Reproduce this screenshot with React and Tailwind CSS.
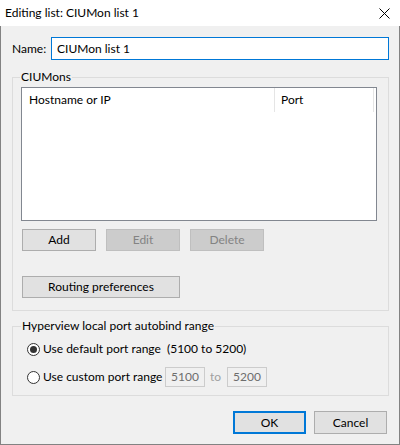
import React from "react";

const font = { fontFamily: 'Lato, "Noto Sans", sans-serif' };

function Btn({ children, disabled, className = "" }) {
  return (
    <div
      className={
        "flex items-center justify-center text-[12px] leading-none whitespace-nowrap " +
        (disabled
          ? "bg-[#cccccc] border border-[#bfbfbf] text-[#838383] "
          : "bg-[#e1e1e1] border border-[#adadad] text-black ") +
        className
      }
    >
      {children}
    </div>
  );
}

function Radio({ checked }) {
  return (
    <div className="w-[13px] h-[13px] rounded-full border border-[#333333] bg-white flex items-center justify-center shrink-0">
      {checked && <div className="w-[7px] h-[7px] rounded-full bg-[#333333]" />}
    </div>
  );
}

export default function App() {
  return (
    <div className="w-[400px] h-[445px] flex flex-col bg-[#f0f0f0] text-black text-[12px] whitespace-nowrap" style={font}>
      <div className="h-[26px] bg-white flex items-center justify-between pl-[5px] pr-[10px] shrink-0">
        <span className="text-[12px]">Editing list: CIUMon list 1</span>
        <svg width="11" height="11" viewBox="0 0 11 11" className="mt-[1px]">
          <path d="M0.5 0.5 L10.5 10.5 M10.5 0.5 L0.5 10.5" stroke="#000" strokeWidth="1" fill="none" />
        </svg>
      </div>
      <div className="flex-1 flex flex-col border-l border-r border-b border-[#828282] pl-[11px] pr-[10px] pt-[11px]">
        <div className="flex items-center h-[23px]">
          <span className="w-[39px]">Name:</span>
          <div className="flex-1 h-[23px] border border-[#0078d7] bg-white flex items-center pl-[5px]">
            CIUMon list 1
          </div>
        </div>

        <fieldset className="mt-[9px] border border-[#dcdcdc] px-[8px] pb-[12px]">
          <legend className="ml-[-1px] px-[1px] h-[16px] leading-[16px]">CIUMons</legend>
          <div className="mt-[2px] w-[356px] h-[134px] border border-[#828790] bg-white">
            <div className="flex h-[24px]">
              <div className="w-[253px] border-r border-[#e5e5e5] flex items-center pl-[7px]">Hostname or IP</div>
              <div className="w-[99px] border-r border-[#e5e5e5] flex items-center pl-[6px]">Port</div>
            </div>
          </div>
          <div className="flex gap-[10px] mt-[8px] ml-[1px]">
            <Btn className="w-[74px] h-[22px]">Add</Btn>
            <Btn disabled className="w-[74px] h-[22px]">Edit</Btn>
            <Btn disabled className="w-[74px] h-[22px]">Delete</Btn>
          </div>
          <Btn className="mt-[25px] ml-[1px] w-[158px] h-[22px]">Routing preferences</Btn>
        </fieldset>

        <fieldset className="mt-[7px] border border-[#dcdcdc] pl-[14px] pb-[8px]">
          <legend className="ml-[-6px] px-[1px] h-[16px] leading-[16px]">Hyperview local port autobind range</legend>
          <div className="mt-[5px] flex items-center h-[20px]">
            <Radio checked />
            <span className="ml-[3px] w-[122px]">Use default port range</span>
            <span className="ml-[2px]">(5100 to 5200)</span>
          </div>
          <div className="mt-[8px] flex items-center h-[20px]">
            <Radio />
            <span className="ml-[3px] w-[122px]">Use custom port range</span>
            <div className="w-[40px] h-[20px] border border-[#cccccc] bg-[#f0f0f0] text-[#6d6d6d] flex items-center pl-[5px]">5100</div>
            <span className="ml-[5px] text-[#a0a0a0]">to</span>
            <div className="ml-[6px] w-[40px] h-[20px] border border-[#cccccc] bg-[#f0f0f0] text-[#6d6d6d] flex items-center pl-[5px]">5200</div>
          </div>
        </fieldset>

        <div className="mt-[15px] flex justify-end gap-[8px] pr-[2px]">
          <div className="w-[73px] h-[23px] border-2 border-[#0078d7] bg-[#e1e1e1] flex items-center justify-center">OK</div>
          <Btn className="w-[73px] h-[23px]">Cancel</Btn>
        </div>
      </div>
    </div>
  );
}
